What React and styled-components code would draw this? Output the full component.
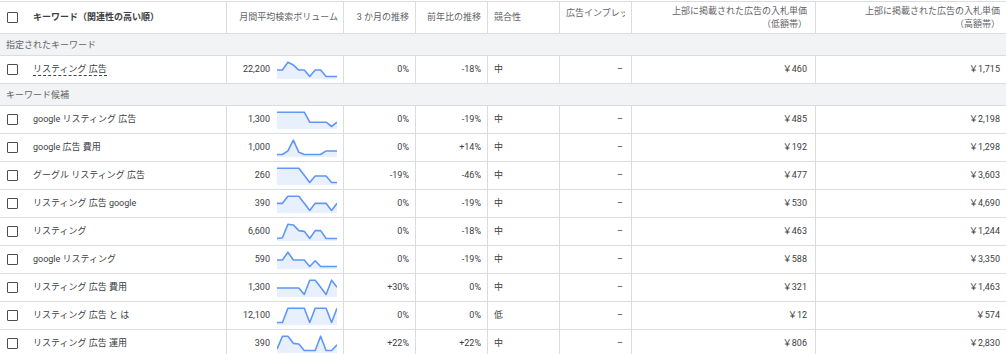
import React from "react";
import styled, { createGlobalStyle } from "styled-components";

const GlobalStyle = createGlobalStyle`
  html, body { margin: 0; padding: 0; background: #ffffff; }
  body {
    font-family: Roboto, "Noto Sans CJK JP", sans-serif;
    font-size: 9px;
    color: #3c4043;
    -webkit-font-smoothing: antialiased;
  }
  * { box-sizing: border-box; }
`;

const COLS = "227px 117px 72px 72px 72px 72px 184px 190px";
const BORDER = "#dadce0";

const Table = styled.div`
  width: 1006px;
  padding-top: 1px;
`;

const HeaderRow = styled.div`
  display: grid;
  grid-template-columns: ${COLS};
  height: 33px;
  border-top: 1px solid ${BORDER};
  border-bottom: 1px solid ${BORDER};
  color: #5f6368;
`;

const DataRow = styled.div`
  display: grid;
  grid-template-columns: ${COLS};
  height: 28px;
  border-bottom: 1px solid ${BORDER};
`;

const GroupRow = styled.div`
  display: flex;
  align-items: center;
  height: 22px;
  padding-left: 6px;
  background: #f1f3f4;
  border-bottom: 1px solid ${BORDER};
  color: #5f6368;
`;

const Cell = styled.div`
  display: flex;
  align-items: ${(p) => (p.$top ? "flex-start" : "center")};
  justify-content: ${(p) => (p.$right ? "flex-end" : "flex-start")};
  text-align: ${(p) => (p.$right ? "right" : "left")};
  padding-left: ${(p) => (p.$pl ?? 6)}px;
  padding-right: ${(p) => (p.$pr ?? 6)}px;
  padding-top: ${(p) => (p.$top ? 5 : 0)}px;
  border-right: ${(p) => (p.$last ? "none" : `1px solid ${BORDER}`)};
  white-space: nowrap;
  overflow: hidden;
  line-height: 13px;
`;

const HeadTitle = styled.span`
  font-weight: 700;
  color: #3c4043;
`;

const Clip = styled.span`
  display: block;
  overflow: hidden;
  white-space: nowrap;
  width: 100%;
`;

const Box = styled.span`
  display: inline-block;
  flex: none;
  width: 11px;
  height: 11px;
  border: 1px solid #4a4d51;
  border-radius: 1px;
  margin-right: 15px;
  background: #fff;
`;

const Keyword = styled.span`
  color: #3c4043;
  ${(p) =>
    p.$dashed
      ? `border-bottom: 1px dashed #3c4043; line-height: 10px; padding-bottom: 1px;`
      : ""}
`;

const Volume = styled.span`
  margin-right: 7px;
`;

const Spark = styled.svg`
  display: block;
  flex: none;
`;

function Sparkline({ values }) {
  const w = 60;
  const h = 18;
  const n = values.length;
  const pts = values.map((v, i) => [
    (i * w) / (n - 1),
    1.2 + (1 - v) * 14.3,
  ]);
  const line = pts.map(([x, y]) => `${x.toFixed(2)},${y.toFixed(2)}`).join(" ");
  const area = `0,${h} ${line} ${w},${h}`;
  return (
    <Spark width={w} height={h} viewBox={`0 0 ${w} ${h}`}>
      <polygon points={area} fill="#e8f0fe" />
      <polyline
        points={line}
        fill="none"
        stroke="#5e97f6"
        strokeWidth="1.6"
        strokeLinejoin="round"
      />
    </Spark>
  );
}

const specified = [
  {
    kw: "リスティング 広告",
    vol: "22,200",
    spark: [0.45, 0.45, 1, 0.8, 0.45, 0.45, 0, 0.45, 0.45, 0, 0, 0],
    m3: "0%",
    yoy: "-18%",
    comp: "中",
    low: "￥460",
    high: "￥1,715",
  },
];

const candidates = [
  {
    kw: "google リスティング 広告",
    vol: "1,300",
    spark: [1, 1, 1, 1, 1, 1, 0.3, 0.3, 0.3, 0.3, 0, 0.3],
    m3: "0%",
    yoy: "-19%",
    comp: "中",
    low: "￥485",
    high: "￥2,198",
  },
  {
    kw: "google 広告 費用",
    vol: "1,000",
    spark: [0, 0, 0.25, 1, 0.15, 0, 0, 0, 0, 0.25, 0.25, 0.25],
    m3: "0%",
    yoy: "+14%",
    comp: "中",
    low: "￥192",
    high: "￥1,298",
  },
  {
    kw: "グーグル リスティング 広告",
    vol: "260",
    spark: [1, 1, 1, 1, 1, 0.5, 0, 0.45, 0.45, 0.45, 0, 0],
    m3: "-19%",
    yoy: "-46%",
    comp: "中",
    low: "￥477",
    high: "￥3,603",
  },
  {
    kw: "リスティング 広告 google",
    vol: "390",
    spark: [0.5, 0.5, 1, 1, 1, 0.5, 0, 0.5, 0.5, 0.5, 0, 0.5],
    m3: "0%",
    yoy: "-19%",
    comp: "中",
    low: "￥530",
    high: "￥4,690",
  },
  {
    kw: "リスティング",
    vol: "6,600",
    spark: [0, 0.05, 1, 0.95, 0.55, 0.5, 0, 0.55, 0.55, 0, 0, 0],
    m3: "0%",
    yoy: "-18%",
    comp: "中",
    low: "￥463",
    high: "￥1,244",
  },
  {
    kw: "google リスティング",
    vol: "590",
    spark: [0.45, 0.45, 1, 0.45, 0.45, 0.45, 0, 0.4, 0, 0, 0, 0],
    m3: "0%",
    yoy: "-19%",
    comp: "中",
    low: "￥588",
    high: "￥3,350",
  },
  {
    kw: "リスティング 広告 費用",
    vol: "1,300",
    spark: [0.45, 0.45, 0.45, 0.45, 0.45, 0, 1, 1, 0.5, 0, 1, 0.5],
    m3: "+30%",
    yoy: "0%",
    comp: "中",
    low: "￥321",
    high: "￥1,463",
  },
  {
    kw: "リスティング 広告 と は",
    vol: "12,100",
    spark: [0, 0, 1, 1, 1, 1, 0, 1, 1, 1, 0, 1],
    m3: "0%",
    yoy: "0%",
    comp: "低",
    low: "￥12",
    high: "￥574",
  },
  {
    kw: "リスティング 広告 運用",
    vol: "390",
    spark: [0.1, 1, 1, 0.5, 0.45, 0, 0, 0, 1, 0, 0, 0.4],
    m3: "+22%",
    yoy: "+22%",
    comp: "中",
    low: "￥806",
    high: "￥2,830",
  },
];

function Row({ r, dashed }) {
  return (
    <DataRow>
      <Cell $pl={7}>
        <Box />
        <Keyword $dashed={dashed}>{r.kw}</Keyword>
      </Cell>
      <Cell $right>
        <Volume>{r.vol}</Volume>
        <Sparkline values={r.spark} />
      </Cell>
      <Cell $right>{r.m3}</Cell>
      <Cell $right>{r.yoy}</Cell>
      <Cell>{r.comp}</Cell>
      <Cell $right $pr={8}>–</Cell>
      <Cell $right $pr={8}>{r.low}</Cell>
      <Cell $right $last>{r.high}</Cell>
    </DataRow>
  );
}

export default function App() {
  return (
    <>
      <GlobalStyle />
      <Table>
        <HeaderRow>
          <Cell $pl={7}>
            <Box />
            <HeadTitle>キーワード（関連性の高い順）</HeadTitle>
          </Cell>
          <Cell $right $pr={5}>月間平均検索ボリューム</Cell>
          <Cell $right>3 か月の推移</Cell>
          <Cell $right>前年比の推移</Cell>
          <Cell>競合性</Cell>
          <Cell $top>
            <Clip>広告インプレッション シェア</Clip>
          </Cell>
          <Cell $right $pr={8}>
            上部に掲載された広告の入札単価
            <br />
            （低額帯）
          </Cell>
          <Cell $right $last>
            上部に掲載された広告の入札単価
            <br />
            （高額帯）
          </Cell>
        </HeaderRow>
        <GroupRow>指定されたキーワード</GroupRow>
        {specified.map((r) => (
          <Row key={r.kw} r={r} dashed />
        ))}
        <GroupRow>キーワード候補</GroupRow>
        {candidates.map((r) => (
          <Row key={r.kw} r={r} />
        ))}
      </Table>
    </>
  );
}
